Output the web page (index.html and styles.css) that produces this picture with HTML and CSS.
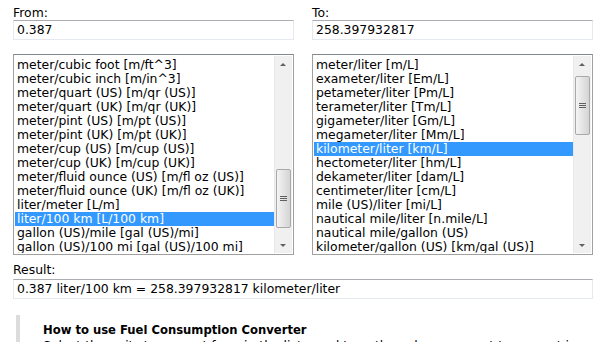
FILE: index.html
```html
<!DOCTYPE html>
<html>
<head>
<meta charset="utf-8">
<link rel="stylesheet" href="styles.css">
</head>
<body>
<div class="page">
  <div class="cols">
    <div class="col">
      <div class="label">From:</div>
      <div class="input">0.387</div>
      <div class="listbox">
        <div class="items">
          <div class="opt">meter/cubic foot [m/ft^3]</div>
          <div class="opt">meter/cubic inch [m/in^3]</div>
          <div class="opt">meter/quart (US) [m/qr (US)]</div>
          <div class="opt">meter/quart (UK) [m/qr (UK)]</div>
          <div class="opt">meter/pint (US) [m/pt (US)]</div>
          <div class="opt">meter/pint (UK) [m/pt (UK)]</div>
          <div class="opt">meter/cup (US) [m/cup (US)]</div>
          <div class="opt">meter/cup (UK) [m/cup (UK)]</div>
          <div class="opt">meter/fluid ounce (US) [m/fl oz (US)]</div>
          <div class="opt">meter/fluid ounce (UK) [m/fl oz (UK)]</div>
          <div class="opt">liter/meter [L/m]</div>
          <div class="opt sel">liter/100 km [L/100 km]</div>
          <div class="opt">gallon (US)/mile [gal (US)/mi]</div>
          <div class="opt">gallon (US)/100 mi [gal (US)/100 mi]</div>
        </div>
        <div class="sbar">
          <div class="arrow up"></div>
          <div class="track">
            <div class="thumb thumb-left"><span class="grip"></span></div>
          </div>
          <div class="arrow down"></div>
        </div>
      </div>
    </div>
    <div class="col">
      <div class="label">To:</div>
      <div class="input">258.397932817</div>
      <div class="listbox">
        <div class="items">
          <div class="opt">meter/liter [m/L]</div>
          <div class="opt">exameter/liter [Em/L]</div>
          <div class="opt">petameter/liter [Pm/L]</div>
          <div class="opt">terameter/liter [Tm/L]</div>
          <div class="opt">gigameter/liter [Gm/L]</div>
          <div class="opt">megameter/liter [Mm/L]</div>
          <div class="opt sel">kilometer/liter [km/L]</div>
          <div class="opt">hectometer/liter [hm/L]</div>
          <div class="opt">dekameter/liter [dam/L]</div>
          <div class="opt">centimeter/liter [cm/L]</div>
          <div class="opt">mile (US)/liter [mi/L]</div>
          <div class="opt">nautical mile/liter [n.mile/L]</div>
          <div class="opt">nautical mile/gallon (US)</div>
          <div class="opt">kilometer/gallon (US) [km/gal (US)]</div>
        </div>
        <div class="sbar">
          <div class="arrow up"></div>
          <div class="track">
            <div class="thumb thumb-right"><span class="grip"></span></div>
          </div>
          <div class="arrow down"></div>
        </div>
      </div>
    </div>
  </div>
  <div class="label result-label">Result:</div>
  <div class="input">0.387 liter/100 km = 258.397932817 kilometer/liter</div>
  <div class="howto">
    <h3>How to use Fuel Consumption Converter</h3>
    <p>Select the units to convert from in the lists, and type the value you want to convert in the From field.</p>
  </div>
</div>
</body>
</html>
```
FILE: styles.css
```css
html, body {
  margin: 0;
  padding: 0;
  background: #fff;
}
body {
  font-family: "DejaVu Sans", Verdana, sans-serif;
  font-size: 12.4px;
  color: #000;
  overflow: hidden;
  height: 342px;
}
.page {
  padding: 6px 6px 0 13px;
  width: 580px;
}
.cols {
  display: flex;
  gap: 18px;
}
.col {
  width: 281px;
  display: flex;
  flex-direction: column;
}
.label {
  height: 14px;
  line-height: 14px;
}
.input {
  box-sizing: border-box;
  height: 20px;
  line-height: 18px;
  padding: 0 3px;
  border: 1px solid #e3e9ef;
  border-top-color: #abadb3;
  white-space: nowrap;
  overflow: hidden;
}
.listbox {
  box-sizing: border-box;
  margin-top: 14px;
  height: 201px;
  border: 1px solid #a0a0a0;
  border-top-color: #828790;
  display: flex;
  padding: 1px;
}
.items {
  flex: 1;
  padding-top: 2px;
  overflow: hidden;
}
.opt {
  height: 14px;
  line-height: 14px;
  padding-left: 2px;
  white-space: nowrap;
}
.opt.sel {
  background: #3399ff;
  color: #fff;
}
.sbar {
  width: 17px;
  background: #f0f0f0;
  display: flex;
  flex-direction: column;
  border-left: 1px solid #e8e8e8;
}
.arrow {
  height: 17px;
  position: relative;
}
.arrow::after {
  content: "";
  position: absolute;
  left: 5px;
  width: 0;
  height: 0;
  border-left: 3px solid transparent;
  border-right: 3px solid transparent;
}
.arrow.up::after {
  top: 7px;
  border-bottom: 3px solid #606060;
}
.arrow.down::after {
  top: 8px;
  border-top: 3px solid #606060;
}
.track {
  flex: 1;
  display: flex;
  flex-direction: column;
}
.thumb {
  box-sizing: border-box;
  height: 59px;
  margin: 0 1px 0 1px;
  border: 1px solid #a9a9a9;
  border-radius: 2px;
  background: linear-gradient(to right, #f4f4f4, #e4e4e4 50%, #d4d4d4);
  display: flex;
  align-items: center;
  justify-content: center;
}
.thumb-left {
  margin-top: 96px;
}
.thumb-right {
  margin-top: 3px;
}
.grip {
  width: 7px;
  height: 5px;
  background: repeating-linear-gradient(to bottom, #606060 0, #606060 1px, transparent 1px, transparent 2px);
}
.result-label {
  margin-top: 8px;
  margin-bottom: 2px;
}
.howto {
  margin: 16px 0 0 3px;
  border-left: 4px solid #dcdcdc;
  padding: 8px 0 0 23px;
}
.howto h3 {
  margin: 0;
  font-size: 11.6px;
  font-weight: bold;
  line-height: 15px;
}
.howto p {
  margin: 0;
  line-height: 15px;
}
```
